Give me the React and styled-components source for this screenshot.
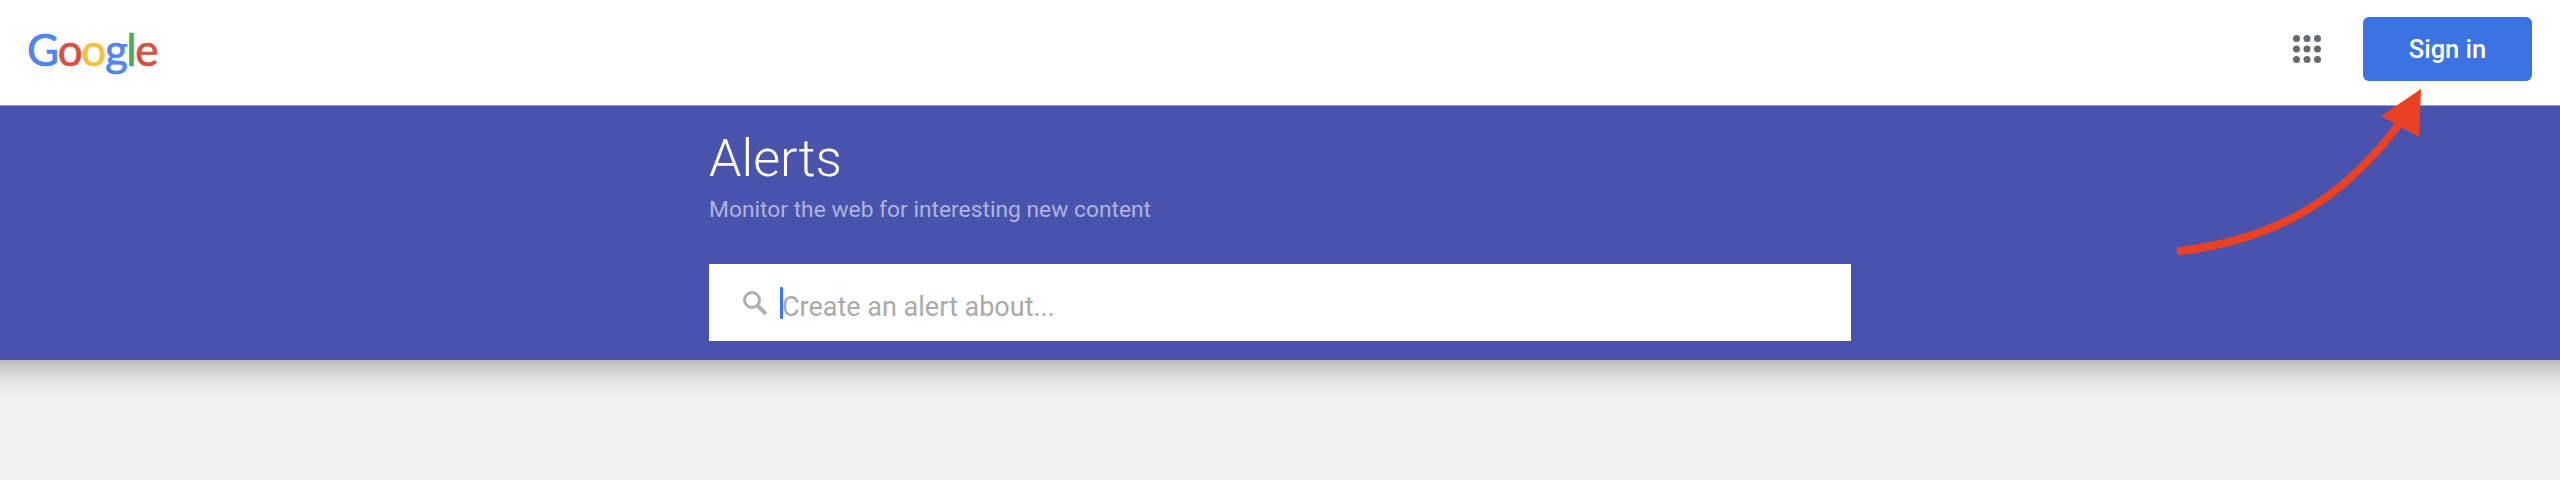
import React from "react";
import styled, { createGlobalStyle } from "styled-components";

const Global = createGlobalStyle`
  html, body { margin: 0; padding: 0; background: #f1f1f1; }
  body { font-family: Roboto, "Liberation Sans", sans-serif; }
`;
const Page = styled.div`
  position: relative;
  width: 2560px;
  height: 480px;
  overflow: hidden;
  background: #f1f1f1;
`;
const Header = styled.header`
  position: relative;
  z-index: 1;
  display: flex;
  align-items: center;
  justify-content: space-between;
  height: 105px;
  box-sizing: border-box;
  padding: 0 28px 7px 27px;
  background: #fff;
`;
const Logo = styled.div`
  display: flex;
  font-family: Lato, sans-serif;
  font-size: 44px;
  line-height: 1;
  font-weight: 400;
  letter-spacing: -1.4px;
  -webkit-text-stroke: 0.7px currentColor;
`;
const Letter = styled.span`
  color: ${(p) => p.$color};
`;
const Actions = styled.div`
  display: flex;
  align-items: center;
  gap: 42px;
`;
const Button = styled.button`
  width: 169px;
  height: 64px;
  border: 0;
  border-radius: 6px;
  background: #3b74e2;
  color: #fff;
  font-family: Roboto, sans-serif;
  font-size: 25.5px;
  font-weight: 500;
  padding: 0;
`;
const Banner = styled.section`
  display: flex;
  justify-content: center;
  height: 255px;
  margin: 0 -60px;
  box-sizing: border-box;
  border-top: 1px solid #9a9fd0;
  background: #4a53ab;
  box-shadow: 0 6px 30px rgba(0, 0, 0, 0.34);
`;
const Inner = styled.div`
  display: flex;
  flex-direction: column;
  width: 1142px;
`;
const Title = styled.h1`
  margin: 23px 0 0;
  font-size: 52px;
  line-height: 60px;
  font-weight: 300;
  color: #fff;
`;
const Subtitle = styled.p`
  margin: 8px 0 0;
  font-size: 22.8px;
  line-height: 26px;
  color: #aeb3e0;
`;
const SearchBox = styled.div`
  display: flex;
  align-items: center;
  height: 77px;
  margin-top: 41px;
  padding-left: 33px;
  background: #fff;
`;
const Caret = styled.span`
  width: 3px;
  height: 32px;
  margin-left: 12px;
  margin-right: -1px;
  border-radius: 1px;
  background: #3b78f0;
`;
const Placeholder = styled.span`
  font-size: 27px;
  color: #aaa;
  padding-top: 9px;
`;
const ArrowLayer = styled.svg`
  position: absolute;
  z-index: 2;
  left: 0;
  top: 0;
  pointer-events: none;
`;

const letters = [
  ["G", "#4f86ec"],
  ["o", "#d94f3d"],
  ["o", "#f4c13d"],
  ["g", "#4f86ec"],
  ["l", "#55a860"],
  ["e", "#d94f3d"],
];

function AppsIcon() {
  const dots = [];
  for (let r = 0; r < 3; r++)
    for (let c = 0; c < 3; c++)
      dots.push(<circle key={`${r}${c}`} cx={3.5 + c * 10.5} cy={3.5 + r * 10.5} r="3.5" fill="#666a70" />);
  return <svg width="28" height="28" viewBox="0 0 28 28">{dots}</svg>;
}

function SearchIcon() {
  return (
    <svg width="26" height="26" viewBox="0 0 26 26" fill="none" stroke="#b0b0b0">
      <circle cx="10" cy="10" r="7.5" strokeWidth="3" />
      <path d="M16 16l8 8" strokeWidth="4" />
    </svg>
  );
}

export default function App() {
  return (
    <Page>
      <Global />
      <Header>
        <Logo>
          {letters.map(([l, c], i) => (
            <Letter key={i} $color={c}>{l}</Letter>
          ))}
        </Logo>
        <Actions>
          <AppsIcon />
          <Button>Sign in</Button>
        </Actions>
      </Header>
      <Banner>
        <Inner>
          <Title>Alerts</Title>
          <Subtitle>Monitor the web for interesting new content</Subtitle>
          <SearchBox>
            <SearchIcon />
            <Caret />
            <Placeholder>Create an alert about...</Placeholder>
          </SearchBox>
        </Inner>
      </Banner>
      <ArrowLayer width="2560" height="480" viewBox="0 0 2560 480">
        <path d="M2177 251.5C2270 240 2340 205 2402 120" fill="none" stroke="#ea4023" strokeWidth="8" />
        <path d="M2421 89L2381 116L2419 137Z" fill="#ea4023" />
      </ArrowLayer>
    </Page>
  );
}
